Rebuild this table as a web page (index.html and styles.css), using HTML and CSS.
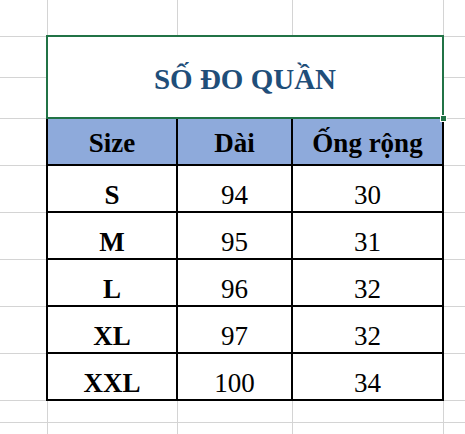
FILE: index.html
```html
<!DOCTYPE html>
<html lang="vi">
<head>
<meta charset="utf-8">
<title>Số đo quần</title>
<link rel="stylesheet" href="styles.css">
</head>
<body>
<table class="sheet">
  <colgroup>
    <col class="c-a"><col class="c-b"><col class="c-c"><col class="c-d"><col class="c-e">
  </colgroup>
  <tr class="r-top"><td></td><td></td><td></td><td></td><td></td></tr>
  <tr class="r-title">
    <td></td>
    <td class="title" colspan="3" rowspan="2">SỐ ĐO QUẦN<span class="handle"></span></td>
    <td></td>
  </tr>
  <tr class="r-title"><td></td><td></td></tr>
  <tr class="r-row">
    <td></td>
    <td class="hd">Size</td><td class="hd">Dài</td><td class="hd">Ống rộng</td>
    <td></td>
  </tr>
  <tr class="r-row"><td></td><td class="dt b">S</td><td class="dt">94</td><td class="dt">30</td><td></td></tr>
  <tr class="r-row"><td></td><td class="dt b">M</td><td class="dt">95</td><td class="dt">31</td><td></td></tr>
  <tr class="r-row"><td></td><td class="dt b">L</td><td class="dt">96</td><td class="dt">32</td><td></td></tr>
  <tr class="r-row"><td></td><td class="dt b">XL</td><td class="dt">97</td><td class="dt">32</td><td></td></tr>
  <tr class="r-row"><td></td><td class="dt b">XXL</td><td class="dt">100</td><td class="dt">34</td><td></td></tr>
  <tr class="r-small"><td></td><td></td><td></td><td></td><td></td></tr>
  <tr class="r-small"><td></td><td></td><td></td><td></td><td></td></tr>
</table>
</body>
</html>
```

FILE: styles.css
```css
html, body {
  margin: 0;
  padding: 0;
  background: #ffffff;
  overflow: hidden;
}

.sheet {
  border-collapse: collapse;
  table-layout: fixed;
  width: 465px;
  font-family: "Liberation Serif", "Times New Roman", serif;
  color: #000;
}

.c-a { width: 47px; }
.c-b { width: 130px; }
.c-c { width: 115px; }
.c-d { width: 151px; }
.c-e { width: 22px; }

.sheet td {
  border: 1px solid #d4d4d4;
  padding: 0;
  text-align: center;
}

.sheet tr:first-child td { border-top: none; }
.sheet td:first-child { border-left: none; }

.r-top { height: 36px; }
.r-title { height: 41px; }
.r-row { height: 47px; }
.r-small { height: 22px; }

.title {
  position: relative;
  border: 2px solid #217346 !important;
  color: #1f4e79;
  font-weight: bold;
  font-size: 29px;
  line-height: 32px;
  vertical-align: middle;
  padding-top: 3px !important;
}

.handle {
  position: absolute;
  right: -4px;
  bottom: -4px;
  width: 5px;
  height: 5px;
  background: #217346;
  box-shadow: 0 0 0 1px #ffffff;
}

.hd {
  background: #8eaadb;
  border: 2px solid #000 !important;
  font-weight: bold;
  font-size: 27px;
  line-height: 30px;
  vertical-align: bottom;
  padding-bottom: 6px !important;
}

.dt {
  border: 2px solid #000 !important;
  font-size: 27px;
  line-height: 30px;
  vertical-align: bottom;
  padding-bottom: 1px !important;
}

.dt.b { font-weight: bold; }
```
